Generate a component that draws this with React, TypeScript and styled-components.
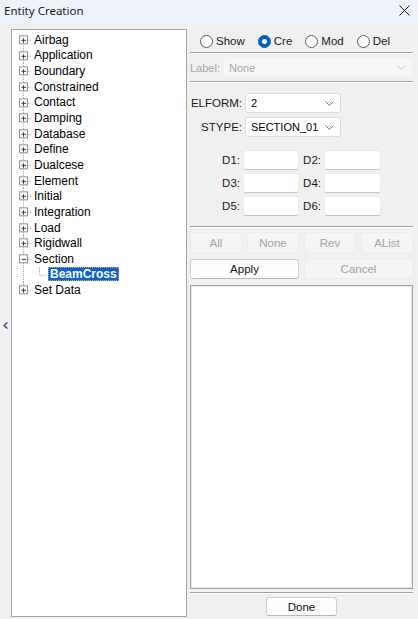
import React from 'react';
import styled, { createGlobalStyle } from 'styled-components';

const GlobalStyle = createGlobalStyle`
  html, body {
    margin: 0;
    padding: 0;
    background: #f0f0f0;
  }
  body {
    font-family: "Liberation Sans", Arial, sans-serif;
    color: #000;
  }
`;

const Window = styled.div`
  width: 418px;
  height: 619px;
  display: flex;
  flex-direction: column;
  background: #f0f0f0;
  overflow: hidden;
`;

const TitleBar = styled.div`
  height: 23px;
  flex: none;
  display: flex;
  align-items: center;
  justify-content: space-between;
  padding: 0 8px 2px 4px;
  box-sizing: border-box;
  background: #eef3f9;
  font-family: "Noto Sans", "Liberation Sans", sans-serif;
  font-size: 11.5px;
  color: #1a1a1a;
`;

const Body = styled.div`
  flex: 1;
  display: flex;
  min-height: 0;
`;

const Gutter = styled.div`
  width: 11px;
  flex: none;
  display: flex;
  align-items: center;
  justify-content: center;
  padding-top: 8px;
`;

const TreePanel = styled.div`
  width: 176px;
  flex: none;
  margin: 6px 0 2px;
  box-sizing: border-box;
  border: 1px solid #a3a3a3;
  background: #fff;
  padding-top: 2px;
`;

const TreeRowLine = styled.div`
  height: 15.65px;
  display: flex;
  align-items: center;
  font-size: 12px;
  white-space: nowrap;
`;

const Guide = styled.svg<{ $w: number }>`
  width: ${(p) => p.$w}px;
  height: 100%;
  flex: none;
  overflow: visible;
`;

const NodeText = styled.span<{ $selected?: boolean }>`
  line-height: 14px;
  height: 14px;
  padding: 0 2px;
  ${(p) =>
    p.$selected
      ? `background: #0a63cf; color: #fff; font-weight: bold; outline: 1px dotted #d9a36a; outline-offset: -1px;`
      : `color: #000;`}
`;

const RightPanel = styled.div`
  flex: 1;
  margin: 0 5px 0 3px;
  display: flex;
  flex-direction: column;
  min-width: 0;
  font-size: 11px;
`;

const RadioRow = styled.div`
  height: 20px;
  margin-top: 8px;
  padding-left: 10px;
  display: flex;
  align-items: center;
  gap: 13px;
  font-size: 11.5px;
  color: #1a1a1a;
`;

const RadioItem = styled.label`
  display: flex;
  align-items: center;
  gap: 3px;
`;

const RadioCircle = styled.span<{ $checked?: boolean }>`
  width: 13px;
  height: 13px;
  box-sizing: border-box;
  border-radius: 50%;
  display: inline-flex;
  align-items: center;
  justify-content: center;
  border: 1px solid ${(p) => (p.$checked ? '#005fb8' : '#5c5c5c')};
  background: ${(p) => (p.$checked ? '#005fb8' : '#fff')};
  &::after {
    content: '';
    width: 5px;
    height: 5px;
    border-radius: 50%;
    background: ${(p) => (p.$checked ? '#fff' : 'transparent')};
  }
`;

const Separator = styled.div<{ $mt: number }>`
  height: 0;
  margin-top: ${(p) => p.$mt}px;
  border-top: 1px solid #a0a0a0;
  border-bottom: 1px solid #fdfdfd;
  flex: none;
`;

const LabelRow = styled.div`
  margin-top: 4px;
  height: 19px;
  display: flex;
  align-items: center;
  gap: 3px;
  color: #a6a6a6;
`;

const Select = styled.div<{ $disabled?: boolean }>`
  height: 100%;
  box-sizing: border-box;
  display: flex;
  align-items: center;
  justify-content: space-between;
  padding: 0 6px 0 5px;
  border: 1px solid ${(p) => (p.$disabled ? '#f2f2f2' : '#dcdcdc')};
  border-radius: 3px;
  background: ${(p) => (p.$disabled ? '#f6f6f6' : '#fff')};
  color: ${(p) => (p.$disabled ? '#a6a6a6' : '#000')};
  font-size: 11px;
`;

const FormGrid = styled.div`
  margin-top: 10px;
  display: grid;
  grid-template-columns: 52px 96px;
  grid-auto-rows: 20px;
  column-gap: 3px;
  row-gap: 4px;
  align-items: center;
`;

const FieldLabel = styled.span`
  text-align: right;
  color: #1a1a1a;
  font-size: 11.5px;
`;

const DGrid = styled.div`
  margin-top: 13px;
  padding-left: 31px;
  display: grid;
  grid-template-columns: 19px 56px 19px 57px;
  grid-auto-rows: 20px;
  column-gap: 3px;
  row-gap: 3px;
  align-items: center;
`;

const TextInput = styled.div`
  height: 100%;
  box-sizing: border-box;
  background: #fff;
  border: 1px solid #ececec;
  border-bottom-color: #c4c4c4;
  border-radius: 3px;
`;

const ButtonGrid = styled.div<{ $cols: number; $mt: number; $h: number }>`
  margin-top: ${(p) => p.$mt}px;
  display: grid;
  grid-template-columns: repeat(${(p) => p.$cols}, 1fr);
  column-gap: 5px;
  height: ${(p) => p.$h}px;
  flex: none;
`;

const Button = styled.div<{ $disabled?: boolean }>`
  box-sizing: border-box;
  display: flex;
  align-items: center;
  justify-content: center;
  border-radius: 3px;
  font-size: 11.5px;
  border: 1px solid ${(p) => (p.$disabled ? '#ececec' : '#d0d0d0')};
  border-bottom-color: ${(p) => (p.$disabled ? '#ececec' : '#b8b8b8')};
  background: ${(p) => (p.$disabled ? '#f5f5f5' : '#fdfdfd')};
  color: ${(p) => (p.$disabled ? '#a3a3a3' : '#111')};
`;

const ListBox = styled.div`
  flex: 1;
  margin-top: 6px;
  background: #fff;
  border: 1px solid #a3a3a3;
  box-shadow: inset 0 0 0 1px #e8e8e8;
`;

const Footer = styled.div`
  height: 19px;
  margin: 3px 0 3px;
  display: flex;
  justify-content: center;
  flex: none;
`;

const DoneButton = styled(Button)`
  width: 71px;
`;

const Chevron = ({ color = '#7a7a7a' }: { color?: string }) => (
  <svg width="9" height="5" viewBox="0 0 9 5">
    <polyline points="0.5,0.5 4.5,4.5 8.5,0.5" fill="none" stroke={color} strokeWidth="1" />
  </svg>
);

type TreeNode = { label: string; expanded?: boolean; children?: string[] };

const tree: TreeNode[] = [
  { label: 'Airbag' },
  { label: 'Application' },
  { label: 'Boundary' },
  { label: 'Constrained' },
  { label: 'Contact' },
  { label: 'Damping' },
  { label: 'Database' },
  { label: 'Define' },
  { label: 'Dualcese' },
  { label: 'Element' },
  { label: 'Initial' },
  { label: 'Integration' },
  { label: 'Load' },
  { label: 'Rigidwall' },
  { label: 'Section', expanded: true, children: ['BeamCross'] },
  { label: 'Set Data' },
];

const DOT = { stroke: '#a8a8a8', strokeWidth: 1, strokeDasharray: '1 1' };

const ExpandBox = ({ open }: { open?: boolean }) => (
  <svg x="0" y="50%" overflow="visible">
    <line x1="16" y1="0.5" x2="19" y2="0.5" {...DOT} />
    <rect x="7.5" y="-4" width="8" height="8" fill="#fbfbfb" stroke="#929292" strokeWidth="1" />
    <line x1="9.5" y1="0.5" x2="14" y2="0.5" stroke="#2c3e66" strokeWidth="1" />
    {!open && <line x1="11.5" y1="-1.5" x2="11.5" y2="3" stroke="#2c3e66" strokeWidth="1" />}
  </svg>
);

const RootRow = ({ node, first, last }: { node: TreeNode; first: boolean; last: boolean }) => (
  <TreeRowLine>
    <Guide $w={20}>
      <line x1="11.5" y1={first ? '50%' : '0'} x2="11.5" y2={last ? '50%' : '100%'} {...DOT} />
      <ExpandBox open={node.expanded} />
    </Guide>
    <NodeText>{node.label}</NodeText>
  </TreeRowLine>
);

const ChildRow = ({ label }: { label: string }) => (
  <TreeRowLine>
    <Guide $w={36}>
      <line x1="11.5" y1="0" x2="11.5" y2="100%" {...DOT} />
      <line x1="27.5" y1="0" x2="27.5" y2="50%" {...DOT} />
      <svg x="0" y="50%" overflow="visible">
        <line x1="27.5" y1="0.5" x2="35" y2="0.5" {...DOT} />
      </svg>
    </Guide>
    <NodeText $selected>{label}</NodeText>
  </TreeRowLine>
);

const Radio = ({ label, checked }: { label: string; checked?: boolean }) => (
  <RadioItem>
    <RadioCircle $checked={checked} />
    {label}
  </RadioItem>
);

export default function App() {
  return (
    <Window>
      <GlobalStyle />
      <TitleBar>
        <span>Entity Creation</span>
        <svg width="11" height="11" viewBox="0 0 11 11">
          <line x1="0.5" y1="0.5" x2="10.5" y2="10.5" stroke="#1a1a1a" strokeWidth="1" />
          <line x1="10.5" y1="0.5" x2="0.5" y2="10.5" stroke="#1a1a1a" strokeWidth="1" />
        </svg>
      </TitleBar>
      <Body>
        <Gutter>
          <svg width="5" height="7" viewBox="0 0 5 7">
            <polyline points="4.5,0.5 1,3.5 4.5,6.5" fill="none" stroke="#24407a" strokeWidth="1.2" />
          </svg>
        </Gutter>
        <TreePanel>
          {tree.map((node, i) => (
            <React.Fragment key={node.label}>
              <RootRow node={node} first={i === 0} last={i === tree.length - 1} />
              {node.expanded && node.children?.map((c) => <ChildRow key={c} label={c} />)}
            </React.Fragment>
          ))}
        </TreePanel>
        <RightPanel>
          <RadioRow>
            <Radio label="Show" />
            <Radio label="Cre" checked />
            <Radio label="Mod" />
            <Radio label="Del" />
          </RadioRow>
          <Separator $mt={1} />
          <LabelRow>
            <span>Label:</span>
            <Select $disabled style={{ flex: 1 }}>
              <span>None</span>
              <Chevron color="#c2c2c2" />
            </Select>
          </LabelRow>
          <Separator $mt={4} />
          <FormGrid>
            <FieldLabel>ELFORM:</FieldLabel>
            <Select>
              <span>2</span>
              <Chevron />
            </Select>
            <FieldLabel>STYPE:</FieldLabel>
            <Select>
              <span>SECTION_01</span>
              <Chevron />
            </Select>
          </FormGrid>
          <DGrid>
            {['D1', 'D2', 'D3', 'D4', 'D5', 'D6'].map((d) => (
              <React.Fragment key={d}>
                <FieldLabel>{d}:</FieldLabel>
                <TextInput />
              </React.Fragment>
            ))}
          </DGrid>
          <Separator $mt={10} />
          <ButtonGrid $cols={4} $mt={4} $h={21}>
            <Button $disabled>All</Button>
            <Button $disabled>None</Button>
            <Button $disabled>Rev</Button>
            <Button $disabled>AList</Button>
          </ButtonGrid>
          <ButtonGrid $cols={2} $mt={6} $h={20}>
            <Button>Apply</Button>
            <Button $disabled>Cancel</Button>
          </ButtonGrid>
          <ListBox />
          <Separator $mt={3} />
          <Footer>
            <DoneButton>Done</DoneButton>
          </Footer>
        </RightPanel>
      </Body>
    </Window>
  );
}
